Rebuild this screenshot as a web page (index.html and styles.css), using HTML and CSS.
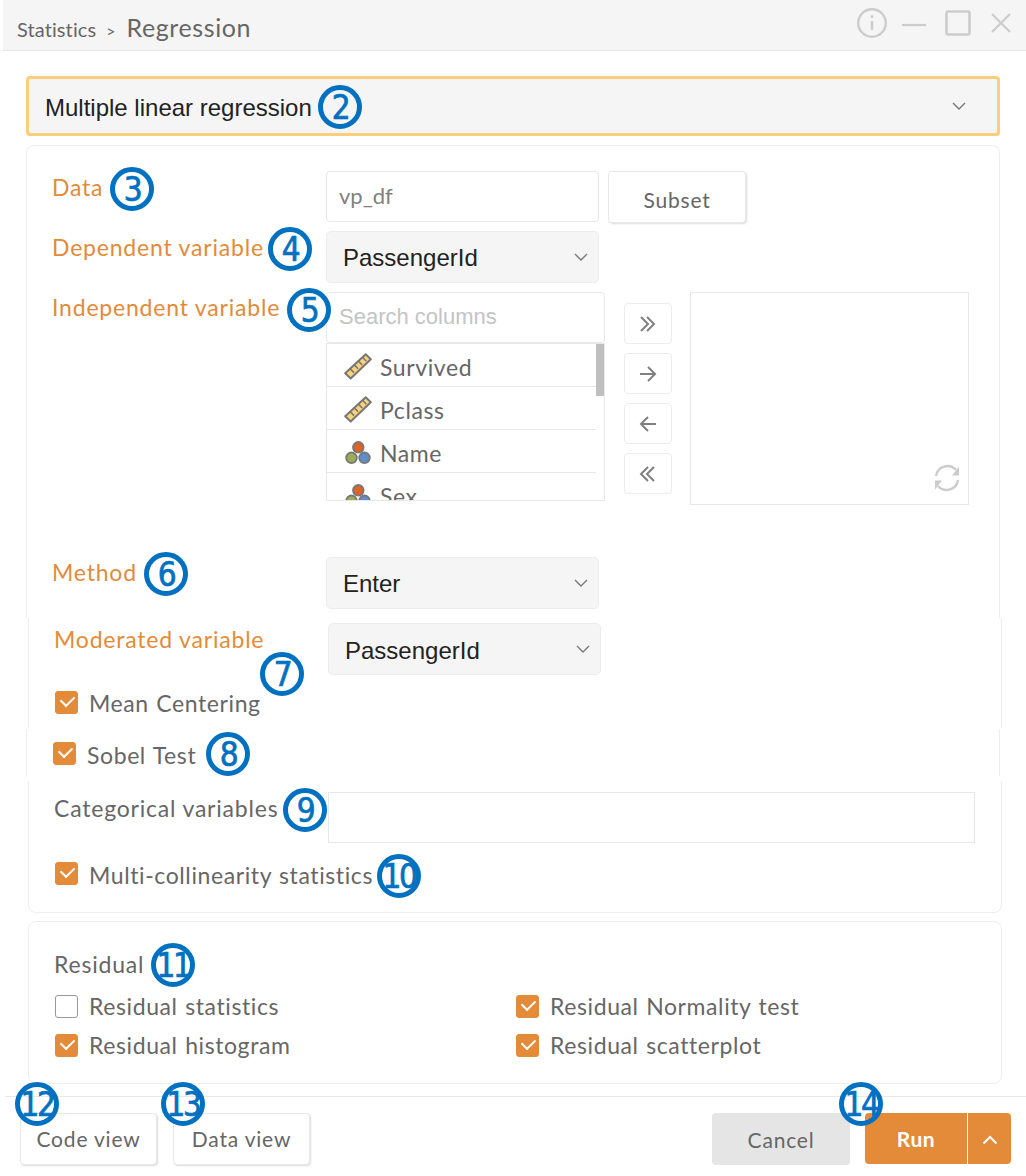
FILE: index.html

```html
<!DOCTYPE html>
<html lang="en">
  <head>
    <meta charset="UTF-8" />
    <meta name="viewport" content="width=device-width, initial-scale=1.0" />
    <title>Regression</title>
    <link rel="stylesheet" href="styles.css">
  </head>

  <body>
    <div class="page">
      <header class="titlebar">
        <div class="crumbs">
          <span class="crumb">Statistics</span>
          <span class="crumb-sep">&gt;</span>
          <span class="crumb-current">Regression</span>
        </div>
        <div class="window-icons">
          <svg class="icon-info" width="32" height="32" viewBox="0 0 32 32" fill="none" stroke="#ccc" stroke-width="2.4">
            <circle cx="16" cy="16" r="13.8" />
            <path d="M16 14v9" stroke-width="2.6" />
            <circle cx="16" cy="9.6" r="1.5" fill="#ccc" stroke="none" />
          </svg>
          <svg class="icon-min" width="26" height="26" viewBox="0 0 26 26" stroke="#ccc" stroke-width="2.2">
            <path d="M1 15h24" />
          </svg>
          <svg class="icon-max" width="27" height="27" viewBox="0 0 27 27" fill="none" stroke="#ccc" stroke-width="2.6">
            <rect x="1.5" y="1.5" width="23" height="23" rx="1.5" />
          </svg>
          <svg class="icon-close" width="22" height="22" viewBox="0 0 22 22" stroke="#ccc" stroke-width="2.2">
            <path d="M2 2l18 18M20 2L2 20" />
          </svg>
        </div>
      </header>

      <div class="model-select">
        <span>Multiple linear regression</span>
        <svg class="chevron" width="14" height="8" viewBox="0 0 14 8" fill="none" stroke="#777" stroke-width="1.4">
          <path d="M1 1l6 6 6-6" />
        </svg>
      </div>

      <section class="panel panel-top">
        <div class="row row-data">
          <label class="field-label accent">Data</label>
          <div class="text-input">vp_df</div>
          <button class="btn btn-subset" type="button">Subset</button>
        </div>

        <div class="row row-dep">
          <label class="field-label accent">Dependent variable</label>
          <div class="select"><span>PassengerId</span>
            <svg class="chevron" width="14" height="8" viewBox="0 0 14 8" fill="none" stroke="#777" stroke-width="1.4"><path d="M1 1l6 6 6-6" /></svg>
          </div>
        </div>

        <div class="row row-indep">
          <label class="field-label accent">Independent variable</label>
          <div class="picker">
            <div class="search">Search columns</div>
            <div class="col-list">
              <ul class="col-items">
                <li>
                  <svg width="28" height="28" viewBox="0 0 28 28"><use href="#ruler" /></svg>
                  Survived
                </li>
                <li>
                  <svg width="28" height="28" viewBox="0 0 28 28"><use href="#ruler" /></svg>
                  Pclass
                </li>
                <li>
                  <svg width="28" height="28" viewBox="0 0 28 28"><use href="#nominal" /></svg>
                  Name
                </li>
                <li>
                  <svg width="28" height="28" viewBox="0 0 28 28"><use href="#nominal" /></svg>
                  Sex
                </li>
              </ul>
              <div class="scroll-track"><div class="scroll-thumb"></div></div>
            </div>
          </div>
          <div class="move-btns">
            <button class="move-btn" type="button">
              <svg width="18" height="18" viewBox="0 0 18 18" fill="none" stroke="#808080" stroke-width="2"><path d="M2 2l7 7-7 7M8 2l7 7-7 7" /></svg>
            </button>
            <button class="move-btn" type="button">
              <svg width="18" height="18" viewBox="0 0 18 18" fill="none" stroke="#808080" stroke-width="2"><path d="M1 9h15M9 2l7 7-7 7" /></svg>
            </button>
            <button class="move-btn" type="button">
              <svg width="18" height="18" viewBox="0 0 18 18" fill="none" stroke="#808080" stroke-width="2"><path d="M17 9H2M9 2L2 9l7 7" /></svg>
            </button>
            <button class="move-btn" type="button">
              <svg width="18" height="18" viewBox="0 0 18 18" fill="none" stroke="#808080" stroke-width="2"><path d="M9 2L2 9l7 7M15 2L8 9l7 7" /></svg>
            </button>
          </div>
          <div class="selected-box">
            <svg class="icon-reload" width="28" height="28" viewBox="0 0 28 28" fill="none" stroke="#ccc" stroke-width="2.4">
              <path d="M3 12A11.5 11.5 0 0 1 23 6M25 16A11.5 11.5 0 0 1 5 22" />
              <path d="M26 2.5v9h-7z M2 25.500v-9h7z" fill="#ccc" stroke="none" />
            </svg>
          </div>
        </div>

        <div class="row row-method">
          <label class="field-label accent">Method</label>
          <div class="select"><span>Enter</span>
            <svg class="chevron" width="14" height="8" viewBox="0 0 14 8" fill="none" stroke="#777" stroke-width="1.4"><path d="M1 1l6 6 6-6" /></svg>
          </div>
        </div>
      </section>

      <section class="panel panel-moderated">
        <div class="row row-moderated">
          <label class="field-label accent">Moderated variable</label>
          <div class="select"><span>PassengerId</span>
            <svg class="chevron" width="14" height="8" viewBox="0 0 14 8" fill="none" stroke="#777" stroke-width="1.4"><path d="M1 1l6 6 6-6" /></svg>
          </div>
        </div>
        <div class="check check-mean">
          <span class="box checked"></span><span class="check-text">Mean Centering</span>
        </div>
      </section>

      <section class="panel panel-sobel">
        <div class="check">
          <span class="box checked"></span><span class="check-text">Sobel Test</span>
        </div>
      </section>

      <section class="panel panel-cat">
        <div class="row row-cat">
          <label class="field-label">Categorical variables</label>
          <div class="cat-input"></div>
        </div>
        <div class="check">
          <span class="box checked"></span><span class="check-text">Multi-collinearity statistics</span>
        </div>
      </section>

      <section class="panel panel-residual">
        <div class="residual-title">Residual</div>
        <div class="residual-grid">
          <div class="check"><span class="box"></span><span class="check-text">Residual statistics</span></div>
          <div class="check"><span class="box checked"></span><span class="check-text">Residual Normality test</span></div>
          <div class="check"><span class="box checked"></span><span class="check-text">Residual histogram</span></div>
          <div class="check"><span class="box checked"></span><span class="check-text">Residual scatterplot</span></div>
        </div>
      </section>

      <footer class="footer">
        <div class="footer-left">
          <button class="btn btn-foot" type="button">Code view</button>
          <button class="btn btn-foot" type="button">Data view</button>
        </div>
        <div class="footer-right">
          <button class="btn-cancel" type="button">Cancel</button>
          <div class="run-group">
            <button class="btn-run" type="button">Run</button>
            <button class="btn-run-more" type="button">
              <svg width="16" height="10" viewBox="0 0 16 10" fill="none" stroke="#fff" stroke-width="2"><path d="M1.500 8.500L8 2l6.500 6.500" /></svg>
            </button>
          </div>
        </div>
      </footer>

      <span class="badge b2">2</span>
      <span class="badge b3">3</span>
      <span class="badge b4">4</span>
      <span class="badge b5">5</span>
      <span class="badge b6">6</span>
      <span class="badge b7">7</span>
      <span class="badge b8">8</span>
      <span class="badge b9">9</span>
      <span class="badge b10">10</span>
      <span class="badge b11">11</span>
      <span class="badge b12">12</span>
      <span class="badge b13">13</span>
      <span class="badge b14">14</span>
    </div>

    <svg class="icon-defs" width="0" height="0">
      <defs>
        <g id="ruler">
          <path d="M1.200 20.300L21.700 1.200l5.100 5L6.700 25.500z" fill="#fbd27a" stroke="#777" stroke-width="2" stroke-linejoin="round" />
          <path d="M6.200 15.700l3.800 3.900M10.300 11.900l3.800 3.900M14.400 8.100l3.800 3.900M18.500 4.300l3.800 3.900" stroke="#777" stroke-width="1.600" />
        </g>
        <g id="nominal">
          <circle cx="14.300" cy="8.300" r="5.300" fill="#de6326" stroke="#777" stroke-width="1.800" />
          <circle cx="7.500" cy="18.800" r="5.300" fill="#9bad57" stroke="#777" stroke-width="1.800" />
          <circle cx="20.500" cy="18.800" r="5.300" fill="#5f8ecb" stroke="#777" stroke-width="1.800" />
        </g>
      </defs>
    </svg>
  </body>
</html>
```

FILE: styles.css

```css
* {
  box-sizing: border-box;
}

html, body {
  margin: 0;
  padding: 0;
  background-color: #fff;
}

body {
  font-family: Lato, "Noto Sans", sans-serif;
  font-size: 23px;
  color: #666;
}

.page {
  position: relative;
  width: 1026px;
  height: 1176px;
  overflow: hidden;
}

.icon-defs {
  position: absolute;
}

/* title bar */
.titlebar {
  display: flex;
  justify-content: space-between;
  align-items: center;
  height: 51px;
  margin-left: 3px;
  padding: 0 14px;
  background-color: #f5f5f5;
  border-bottom: 1px solid #e6e6e6;
}

.crumbs {
  display: flex;
  align-items: baseline;
  padding-top: 4px;
  color: #666;
}

.crumb {
  font-size: 20px;
  letter-spacing: 0.1px;
}

.crumb-sep {
  margin: 0 11px 0 10px;
  font-size: 16px;
}

.crumb-current {
  font-size: 25px;
  letter-spacing: 0.6px;
}

.window-icons {
  display: flex;
  align-items: center;
  gap: 11px;
  margin-top: -4px;
}

.icon-info {
  margin-right: 2px;
}

.icon-min {
  margin-right: 7px;
}

.icon-close {
  margin-left: 7px;
}

/* top select */
.model-select {
  display: flex;
  justify-content: space-between;
  align-items: center;
  width: 974px;
  height: 60px;
  margin: 25px 0 0 26px;
  padding: 0 31px 0 16px;
  background-color: #f5f5f5;
  border: 3px solid #f9cf7a;
  border-radius: 4px;
  font-family: "Liberation Sans", Arial, sans-serif;
  font-size: 24px;
  color: #222;
}

.model-select span {
  padding-top: 3px;
}

/* panels */
.panel {
  border-left: 1px solid #eee;
  border-right: 1px solid #eee;
}

.panel-top {
  width: 974px;
  height: 473px;
  margin: 9px 0 0 26px;
  padding: 25px 0 0 26px;
  border-top: 1px solid #eee;
  border-radius: 8px 8px 0 0;
}

.panel-moderated {
  width: 974px;
  height: 110px;
  margin-left: 28px;
  padding: 5px 0 0 26px;
}

.panel-sobel {
  width: 974px;
  height: 47px;
  margin: 1px 0 0 26px;
  padding-top: 9px;
  padding-left: 26px;
}

.panel-cat {
  width: 974px;
  height: 132px;
  margin: 5px 0 0 28px;
  padding: 11px 0 0 26px;
  border-bottom: 1px solid #eee;
  border-radius: 0 0 8px 8px;
}

.panel-residual {
  width: 974px;
  height: 163px;
  margin: 8px 0 0 28px;
  padding: 26px 0 0 26px;
  border: 1px solid #eee;
  border-radius: 8px;
}

/* rows */
.row {
  display: flex;
  align-items: flex-start;
}

.row-dep {
  margin-top: 8px;
}

.row-indep {
  margin-top: 9px;
}

.row-method {
  margin-top: 52px;
}

.field-label {
  flex: 0 0 274px;
  height: 34px;
  margin-left: -1px;
  line-height: 32px;
  letter-spacing: 0.8px;
  color: #666;
}

.row-indep .field-label,
.row-method .field-label {
  line-height: 30px;
}

.accent {
  color: #e38b38;
}

.text-input {
  width: 273px;
  height: 51px;
  padding: 0 12px;
  line-height: 48px;
  border: 1px solid #e8e8e8;
  border-radius: 4px;
  font-size: 22px;
  color: #808080;
}

.btn {
  background-color: #fff;
  border: 1px solid #e8e8e8;
  border-radius: 4px;
  box-shadow: 1px 1px 2px rgba(0, 0, 0, 0.14);
  font-family: Lato, "Noto Sans", sans-serif;
  font-size: 21px;
  letter-spacing: 0.8px;
  color: #666;
}

.btn-subset {
  width: 138px;
  height: 52px;
  margin-left: 9px;
  padding-top: 6px;
}

.select {
  display: flex;
  justify-content: space-between;
  align-items: center;
  width: 273px;
  height: 52px;
  padding: 0 10px 0 16px;
  background-color: #f5f5f5;
  border: 1px solid #ececec;
  border-radius: 5px;
  font-family: "Liberation Sans", Arial, sans-serif;
  font-size: 24px;
  color: #222;
}

.select span {
  padding-top: 1px;
}

.row-moderated .select span {
  padding-top: 3px;
}

/* variable picker */
.picker {
  width: 279px;
}

.search {
  height: 51px;
  padding: 0 12px;
  line-height: 47px;
  border: 1px solid #e8e8e8;
  border-radius: 4px;
  font-family: "Liberation Sans", Arial, sans-serif;
  font-size: 22px;
  color: #c4c4c4;
}

.col-list {
  display: flex;
  height: 158px;
  border: 1px solid #e8e8e8;
  overflow: hidden;
}

.col-items {
  flex: 1;
  margin: 0;
  padding: 0;
  list-style: none;
  letter-spacing: 0.6px;
}

.col-items li {
  display: flex;
  align-items: center;
  gap: 8px;
  height: 43px;
  padding: 3px 0 0 17px;
  border-bottom: 1px solid #e8e8e8;
  white-space: nowrap;
}

.scroll-track {
  flex: 0 0 8px;
}

.scroll-thumb {
  height: 52px;
  background-color: #bfbfbf;
}

.move-btns {
  display: flex;
  flex-direction: column;
  gap: 9px;
  margin: 11px 18px 0 19px;
}

.move-btn {
  display: flex;
  justify-content: center;
  align-items: center;
  width: 48px;
  height: 41px;
  padding: 0;
  background-color: #fff;
  border: 1px solid #ececec;
  border-radius: 4px;
}

.selected-box {
  display: flex;
  justify-content: flex-end;
  align-items: flex-end;
  width: 279px;
  height: 213px;
  padding: 0 7px 12px 0;
  border: 1px solid #e8e8e8;
}

.cat-input {
  width: 647px;
  height: 51px;
  border: 1px solid #e8e8e8;
}

/* checkboxes */
.check {
  display: flex;
  align-items: center;
  height: 30px;
  letter-spacing: 0.6px;
  word-spacing: 1px;
  color: #666;
}

.check-text {
  padding-top: 3px;
}

.check-mean {
  margin-top: 12px;
}

.check-mean .check-text {
  padding-top: 1px;
}

.row-cat + .check {
  margin-top: 15px;
}

.box {
  flex: 0 0 23px;
  position: relative;
  width: 23px;
  height: 23px;
  margin-right: 11px;
  background-color: #fff;
  border: 1px solid #999;
  border-radius: 3px;
}

.box.checked {
  background-color: #e38b38;
  border-color: #e38b38;
}

.box.checked::after {
  content: "";
  position: absolute;
  left: 5px;
  top: 3px;
  width: 11px;
  height: 7px;
  border-left: 2px solid #fff;
  border-bottom: 2px solid #fff;
  transform: rotate(-45deg);
}

/* residual */
.residual-title {
  height: 34px;
  margin-left: -1px;
  line-height: 32px;
  letter-spacing: 0.8px;
}

.residual-grid {
  display: grid;
  grid-template-columns: 461px 1fr;
  row-gap: 9px;
  margin-top: 9px;
}

.residual-grid .check-text {
  padding-top: 0;
}

/* footer */
.footer {
  display: flex;
  justify-content: space-between;
  align-items: flex-start;
  height: 80px;
  margin: 12px 0 0 5px;
  padding: 16px 15px 0 15px;
  border-top: 1px solid #e8e8e8;
}

.footer-left {
  display: flex;
  gap: 16px;
}

.footer-right {
  display: flex;
  gap: 15px;
}

.btn-foot {
  width: 137px;
  height: 52px;
  padding-bottom: 3px;
}

.btn-cancel {
  width: 138px;
  height: 52px;
  background-color: #e5e5e5;
  border: none;
  border-radius: 4px;
  font-family: Lato, "Noto Sans", sans-serif;
  font-size: 21px;
  letter-spacing: 0.8px;
  color: #666;
}

.run-group {
  display: flex;
  gap: 1px;
  height: 51px;
}

.btn-run, .btn-run-more {
  background-color: #e38b38;
  border: none;
  font-family: Lato, "Noto Sans", sans-serif;
  font-size: 21px;
  font-weight: 700;
  letter-spacing: 0.6px;
  color: #fff;
}

.btn-run {
  width: 102px;
  border-radius: 4px 0 0 4px;
}

.btn-run-more {
  width: 43px;
  padding: 0 0 4px;
  border-radius: 0 4px 4px 0;
}

/* numbered callouts over the form */
.badge {
  position: absolute;
  display: flex;
  justify-content: center;
  align-items: center;
  width: 44px;
  height: 44px;
  border: 5px solid #0070c0;
  border-radius: 50%;
  font-family: "DejaVu Sans Condensed", "DejaVu Sans", sans-serif;
  font-size: 33px;
  font-weight: 400;
  line-height: 1;
  letter-spacing: -2.5px;
  white-space: nowrap;
  color: #0070c0;
  -webkit-text-stroke: 0.7px #0070c0;
}

.b2 { left: 318px; top: 85px; }
.b3 { left: 110px; top: 167px; }
.b4 { left: 268px; top: 227px; }
.b5 { left: 287px; top: 288px; }
.b6 { left: 144px; top: 552px; }
.b7 { left: 260px; top: 652px; }
.b8 { left: 206px; top: 732px; }
.b9 { left: 283px; top: 788px; }
.b10 { left: 377px; top: 854px; }
.b11 { left: 151px; top: 943px; }
.b12 { left: 15px; top: 1082px; }
.b13 { left: 161px; top: 1082px; }
.b14 { left: 839px; top: 1082px; }
```
